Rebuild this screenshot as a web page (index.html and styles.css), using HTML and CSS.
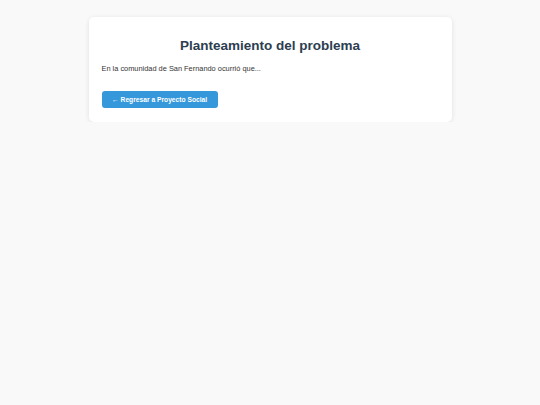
FILE: index.html
```html
<!DOCTYPE html>
<html lang="es">
<head>
<meta charset="utf-8">
<title>Planteamiento del problema</title>
<link rel="stylesheet" href="styles.css">
</head>
<body>
<main class="card">
  <h1 class="title">Planteamiento del problema</h1>
  <p class="text">En la comunidad de San Fernando ocurrió que...</p>
  <a class="btn" href="#">← Regresar a Proyecto Social</a>
</main>
</body>
</html>
```
FILE: styles.css
```css
html, body {
  margin: 0;
  padding: 0;
  background: #f9f9f9;
  font-family: "Liberation Sans", Arial, sans-serif;
}
body {
  padding-top: 17px;
}
.card {
  width: 363px;
  box-sizing: border-box;
  margin: 0 auto;
  background: #fff;
  border-radius: 5px;
  box-shadow: 0 1px 5px rgba(0,0,0,0.1);
  padding: 21px 13px 13px;
}
.title {
  margin: 0 0 9px;
  text-align: center;
  font-size: 13.5px;
  font-weight: bold;
  color: #2c3e50;
  line-height: 16px;
}
.text {
  margin: 0 0 16px;
  font-size: 7.4px;
  line-height: 12px;
  color: #333;
}
.btn {
  display: inline-block;
  vertical-align: top;
  background: #3498db;
  color: #fff;
  text-decoration: none;
  font-size: 6.7px;
  font-weight: bold;
  padding: 4.5px 10.5px;
  line-height: 8px;
  border-radius: 3px;
}
```
